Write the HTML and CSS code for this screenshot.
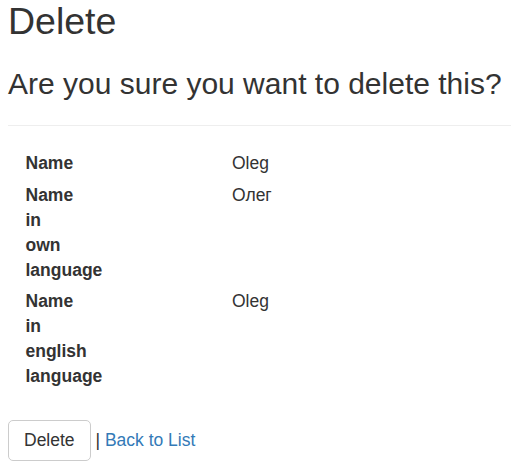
FILE: index.html
```html
<!DOCTYPE html>
<html>
<head>
<meta charset="utf-8">
<title>Delete</title>
<link rel="stylesheet" href="styles.css">
</head>
<body>
<main class="page">
  <h2 class="title">Delete</h2>
  <h3 class="question">Are you sure you want to delete this?</h3>
  <hr class="divider">
  <dl class="details">
    <dt class="label">Name</dt>
    <dd class="value">Oleg</dd>
    <dt class="label">Name in own language</dt>
    <dd class="value">Олег</dd>
    <dt class="label">Name in english language</dt>
    <dd class="value">Oleg</dd>
  </dl>
  <form class="actions">
    <button type="button" class="btn">Delete</button> | <a href="#" class="link">Back to List</a>
  </form>
</main>
</body>
</html>
```

FILE: styles.css
```css
html, body {
  margin: 0;
  padding: 0;
  background: #fff;
}

body {
  font-family: "Liberation Sans", Arial, sans-serif;
  font-size: 17.5px;
  line-height: 25px;
  color: #333;
}

.page {
  padding: 1px 0 0 8px;
}

.title {
  font-size: 37.5px;
  font-weight: normal;
  line-height: 1.1;
  margin: 0 0 12.5px;
}

.question {
  font-size: 30px;
  font-weight: normal;
  line-height: 1.1;
  margin: 25px 0 12.5px;
}

.divider {
  border: 0;
  border-top: 1px solid #eee;
  margin: 25px 0;
}

.details {
  display: grid;
  grid-template-columns: 206.5px 1fr;
  row-gap: 6.25px;
  margin: 0 0 31.5px;
  padding-left: 17.5px;
}

.label {
  font-weight: bold;
  width: 1px;
  white-space: normal;
  margin: 0;
}

.value {
  margin: 0;
}

.actions {
  margin: 0;
}

.btn {
  font-family: inherit;
  font-size: 17.5px;
  line-height: 25px;
  color: #333;
  background: #fff;
  border: 1px solid #ccc;
  border-radius: 5px;
  padding: 7px 15px;
  margin: 0;
  vertical-align: baseline;
}

.link {
  color: #337ab7;
  text-decoration: none;
}
```
